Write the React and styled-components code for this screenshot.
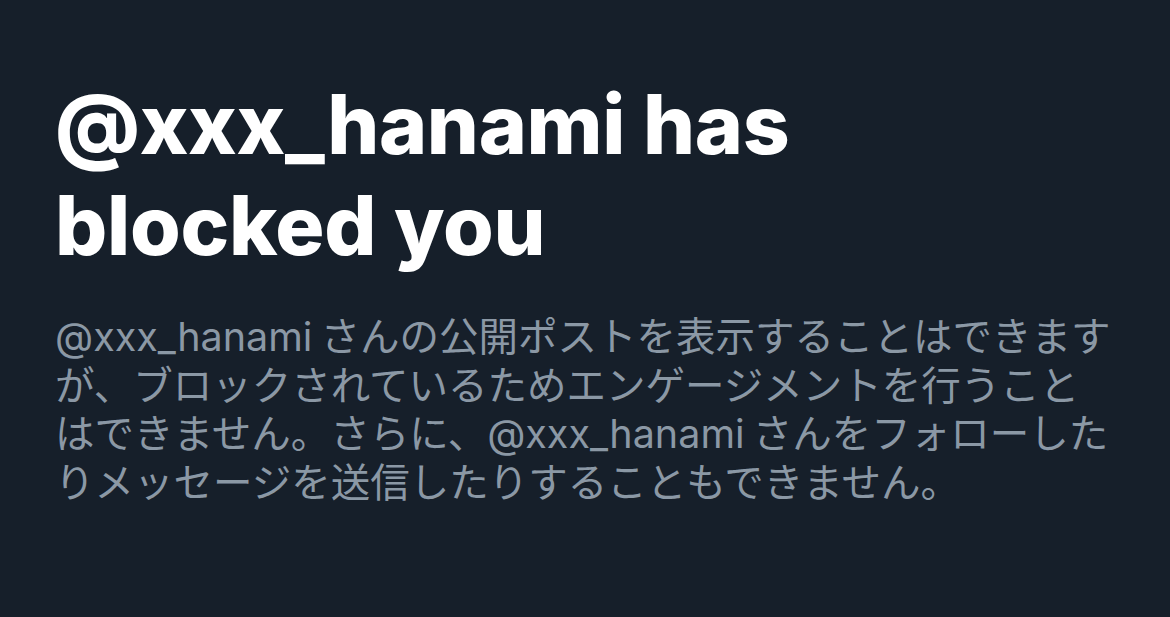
import React from "react";
import styled, { createGlobalStyle } from "styled-components";

const GlobalStyle = createGlobalStyle`
  html, body {
    margin: 0;
    padding: 0;
    background: #161f2a;
  }
  body {
    font-family: Inter, "Noto Sans CJK JP", sans-serif;
    -webkit-font-smoothing: antialiased;
  }
`;

const Page = styled.main`
  width: 1170px;
  height: 617px;
  box-sizing: border-box;
  padding: 74px 30px 0 55px;
  background: #161f2a;
  overflow: hidden;
`;

const Title = styled.h1`
  margin: 0;
  color: #ffffff;
  font-family: Inter, sans-serif;
  font-weight: 800;
  font-size: 82px;
  line-height: 101px;
  letter-spacing: -0.3px;
`;

const Message = styled.p`
  margin: 37px 0 0;
  color: #8b98a5;
  font-family: Inter, "Noto Sans CJK JP", sans-serif;
  font-weight: 400;
  font-size: 39.5px;
  line-height: 48.5px;
  white-space: nowrap;
`;

const Handle = styled.span`
  margin-right: -3px;
`;

export default function App() {
  return (
    <>
      <GlobalStyle />
      <Page>
        <Title>
          @xxx_hanami has
          <br />
          blocked you
        </Title>
        <Message>
          <Handle>@xxx_hanami </Handle>さんの公開ポストを表示することはできます
          <br />
          が、ブロックされているためエンゲージメントを行うこと
          <br />
          はできません。さらに、<Handle>@xxx_hanami </Handle>さんをフォローした
          <br />
          りメッセージを送信したりすることもできません。
        </Message>
      </Page>
    </>
  );
}
